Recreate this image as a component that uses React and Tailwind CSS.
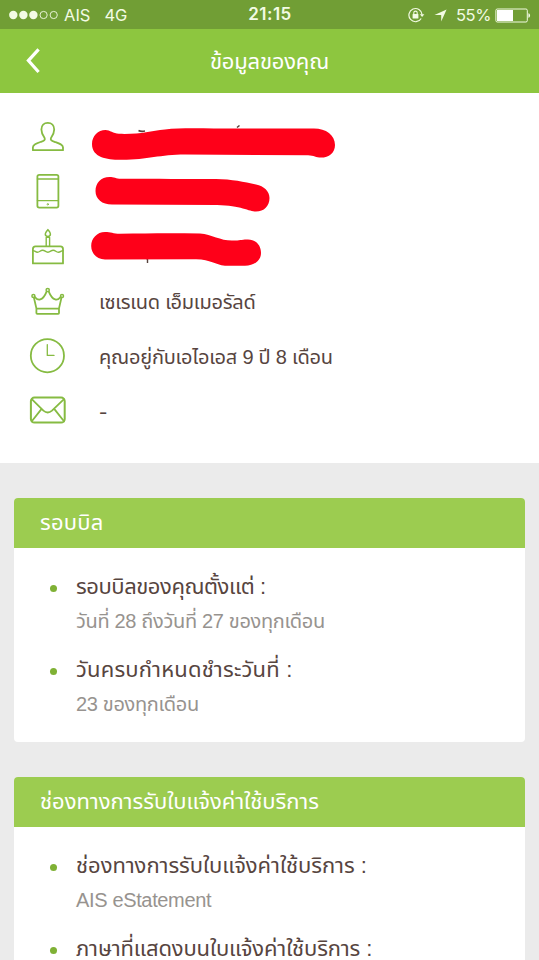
import React from 'react';

const profile = [
    { icon: UserIcon, mark: NameMark },
    { icon: PhoneIcon, mark: PhoneMark },
    { icon: CakeIcon, mark: BirthdayMark },
    { icon: CrownIcon, text: 'เซเรเนด เอ็มเมอรัลด์', style: 'text-[20px] tracking-[-0.25px]' },
    { icon: ClockIcon, text: 'คุณอยู่กับเอไอเอส 9 ปี 8 เดือน', style: 'text-[20px] tracking-[-0.23px]' },
    { icon: MailIcon, text: '-', style: 'text-[20px] scale-x-125 origin-left pt-[2px]' },
];

function Icon({ children }) {
    return (
        <svg
            className="w-10 h-11 shrink-0 text-[#86bb42]"
            viewBox="0 0 40 44"
            fill="none"
            stroke="currentColor"
            strokeWidth="1.8"
            strokeLinejoin="round"
            strokeLinecap="round"
        >
            {children}
        </svg>
    );
}

function UserIcon() {
    return (
        <Icon>
            <path d="M4.9 35.2V32.4C5 29.5 8.5 28.4 13 26.8C16.5 25.6 17.4 24.6 16.6 23C14.6 20.2 13.4 17.6 13.4 14.4C13.4 10.4 16 7.8 19.8 7.8C23.6 7.8 26.2 10.4 26.2 14.4C26.2 17.6 25 20.2 23 23C22.2 24.6 23.1 25.6 26.6 26.8C31.1 28.4 34.9 29.5 35 32.4V35.2Z" />
        </Icon>
    );
}

function PhoneIcon() {
    return (
        <Icon>
            <rect x="9.4" y="4.8" width="21" height="32.8" rx="1.8" />
            <path d="M9.4 9H30.4M9.4 30.6H30.4" strokeWidth="1.3" />
            <circle cx="19.8" cy="34.3" r="0.7" strokeWidth="1" />
        </Icon>
    );
}

function CakeIcon() {
    return (
        <Icon>
            <path d="M4.9 38.4V24C4.9 22.2 6 21.4 7.5 21.4H32.4C34 21.4 35 22.2 35 24V38.4Z" />
            <path d="M5 25.6C7 25.6 7.4 27.2 9.4 27.2C11.8 27.2 12.2 25.2 14.6 25.2C17 25.2 17.4 27.2 19.9 27.2C22.4 27.2 22.8 25.2 25.2 25.2C27.6 25.2 28 27.2 30.4 27.2C32.6 27.2 33 25.6 35 25.6" strokeWidth="1.4" />
            <path d="M18.2 21V12.4H21.6V21" strokeWidth="1.4" />
            <path d="M19.9 4.6C18.6 6.3 17.3 7.4 17.3 9C17.3 10.4 18.4 11.4 19.9 11.4C21.4 11.4 22.4 10.4 22.4 9C22.4 7.4 21.1 6.3 19.9 4.6Z" strokeWidth="1.5" />
        </Icon>
    );
}

function CrownIcon() {
    return (
        <Icon>
            <path d="M8.4 28.4L5.9 17.6M6.9 16.9C9.5 20.6 14.6 21.6 18.6 11.6M20.8 11.6C24.8 21.6 29.9 20.6 32.5 16.9M33.5 17.6L31 28.4" />
            <circle cx="5.4" cy="15.9" r="1.5" strokeWidth="1.5" />
            <circle cx="19.7" cy="10" r="1.6" strokeWidth="1.5" />
            <circle cx="34" cy="15.9" r="1.5" strokeWidth="1.5" />
            <rect x="8.4" y="28.6" width="22.6" height="5.2" rx="0.8" />
        </Icon>
    );
}

function ClockIcon() {
    return (
        <Icon>
            <circle cx="19.4" cy="20.7" r="16.6" />
            <path d="M19.3 9.6V20.4H26" strokeWidth="1.3" />
        </Icon>
    );
}

function MailIcon() {
    return (
        <Icon>
            <rect x="2.9" y="8.6" width="33.8" height="24.9" rx="3.6" strokeWidth="2" />
            <path d="M3.8 10.2L15.4 21.6C18.4 24.2 21 24.2 24 21.6L36 10.2M3.8 32.2L13 20.6M36 32.2L26.8 20.6" />
        </Icon>
    );
}

function NameMark() {
    return (
        <svg className="w-[270px] h-[54px]" viewBox="80 110 270 54" fill="#fe0019">
            <path d="M138.5 130.5Q141 132 145 131M237 127.5L239.5 125.5" stroke="#57423c" strokeWidth="1.6" fill="none" />
            <path d="M105.5 130C110 130 113 133.6 119 133.8C140 134.5 150 131 165 129.4C178 128 195 128.2 214 128.5H314C326 128.5 335 135 335 145C335 153 329 157.6 321 157.6C316 157.6 314 155.3 308 155.2L185 154.6C160 154.6 148 159.8 122 159.8C108 160 92 158 92 144C92 136 98 130 105.5 130Z" />
        </svg>
    );
}

function PhoneMark() {
    return (
        <svg className="w-[270px] h-[54px]" viewBox="80 165 270 54" fill="#fe0019">
            <path d="M109.5 177C114 177 116 178.6 121 178.8C155 179 190 178.8 216 179C232 179.2 244 182 256 184.4C264 186 269.5 191 269.5 198C269.5 206 264 211.6 256 211.6C249 211.6 241 205.4 217 205L112 204.6C102 204.6 95.5 199 95.5 191C95.5 183 101 177 109.5 177Z" />
        </svg>
    );
}

function BirthdayMark() {
    return (
        <svg className="w-[270px] h-[54px]" viewBox="80 220 270 54" fill="#fe0019">
            <path d="M146.5 259H147.5V263" stroke="#57423c" strokeWidth="1.4" fill="none" />
            <path d="M105 232C111 232 113 233.6 120 233.8C150 233 175 233 200 233.4C212 234.4 220 240.4 232 240.6C240 240.8 241 239.2 248 239.4C256 239.6 261 245.6 261 252.8C261 261 254 265.6 245 265.8H225C215 264.6 211 259.6 196 259.2L105 259.4C97 259.4 91.2 253.6 91.2 246C91.2 238.4 97 232 105 232Z" />
        </svg>
    );
}

function StatusBar() {
    return (
        <div className="h-[29px] shrink-0 bg-[#719e35] text-[#f3fbe4] flex items-center pt-px font-['Inter',sans-serif]">
            <div className="flex-1 flex items-center pl-[9px] text-[16.5px]">
                <svg className="w-[50px] h-[10px]" viewBox="0 0 50 10" fill="currentColor">
                    <circle cx="4.3" cy="5" r="4.2" />
                    <circle cx="14.4" cy="5" r="4.2" />
                    <circle cx="24.4" cy="5" r="4.2" />
                    <circle cx="34.6" cy="5" r="3.6" fill="none" stroke="currentColor" strokeWidth="0.9" />
                    <circle cx="44.7" cy="5" r="3.6" fill="none" stroke="currentColor" strokeWidth="0.9" />
                </svg>
                <span className="ml-[5px]">AIS</span>
                <span className="ml-[14px]">4G</span>
            </div>
            <div className="text-[17px] font-semibold tracking-[0.5px]">21:15</div>
            <div className="flex-1 flex items-center justify-end pr-[8px] text-[16.5px]">
                <svg className="w-[17px] h-[16px]" viewBox="0 0 17 16" fill="none" stroke="currentColor">
                    <path d="M13.2 11.5A6.6 6.6 0 1 1 14.1 7.6" strokeWidth="1.2" />
                    <path d="M11.8 7.2H16.4L14.1 10Z" fill="currentColor" stroke="none" />
                    <rect x="4.6" y="7" width="5.8" height="4.4" rx="0.5" fill="currentColor" stroke="none" />
                    <path d="M5.8 7V5.8A1.7 1.7 0 0 1 9.2 5.8V7" strokeWidth="1.1" />
                </svg>
                <svg className="w-[13px] h-[13px] ml-[9px]" viewBox="0 0 13 13" fill="currentColor">
                    <path d="M12.6 0.4L7.2 12.6V5.9H0.5Z" />
                </svg>
                <span className="ml-[9px] tracking-[-0.4px]">55%</span>
                <svg className="w-[36px] h-[15px] ml-[4px]" viewBox="0 0 36 15">
                    <rect x="0.9" y="1" width="31.4" height="13" rx="1.4" fill="none" stroke="currentColor" strokeWidth="1" />
                    <rect x="2" y="2" width="16" height="11" fill="#fff" />
                    <path d="M33.4 5.2C35.6 5.6 35.6 9.4 33.4 9.8Z" fill="currentColor" />
                </svg>
            </div>
        </div>
    );
}

function Card({ title, titleStyle, children }) {
    return (
        <section className="rounded-[4px] overflow-hidden bg-white shrink-0">
            <h2 className={`h-[50px] leading-[50px] pl-[26px] bg-[#9ccc50] text-white whitespace-nowrap ${titleStyle}`}>
                {title}
            </h2>
            <ul className="pt-[20px] pb-[8px]">{children}</ul>
        </section>
    );
}

function Item({ label, labelStyle, value, valueStyle }) {
    return (
        <li className="flex h-[83px] pl-[36px] whitespace-nowrap">
            <span className="w-[7px] h-[7px] mt-[17px] mr-[19px] rounded-full bg-[#7fb135] shrink-0" />
            <div>
                <div className={`h-[37px] leading-[38px] text-[#57453f] ${labelStyle}`}>{label}</div>
                {value && <div className={`h-[32px] leading-[32px] text-[#97938f] ${valueStyle}`}>{value}</div>}
            </div>
        </li>
    );
}

export default function App() {
    return (
        <div className="w-[539px] h-[960px] overflow-hidden flex flex-col bg-[#ebebeb] font-['Liberation_Sans','Noto_Sans_Thai',sans-serif]">
            <StatusBar />
            <header className="h-[64px] shrink-0 bg-[#8dc63f] grid grid-cols-[60px_1fr_60px] items-center text-white">
                <svg className="w-[16px] h-[28px] ml-[25px]" viewBox="0 0 16 28" fill="none" stroke="currentColor" strokeWidth="3.2">
                    <path d="M13.6 2.4L3.4 13.6L13.6 25" />
                </svg>
                <h1 className="text-center text-[22px] tracking-[-0.2px] whitespace-nowrap">ข้อมูลของคุณ</h1>
            </header>

            <div className="h-[370px] shrink-0 bg-white pt-[17px]">
                {profile.map(({ icon: RowIcon, mark: Mark, text, style }, i) => (
                    <div key={i} className="h-[54.8px] flex items-center pl-[28px]">
                        <RowIcon />
                        {Mark ? (
                            <div className="ml-[12px]"><Mark /></div>
                        ) : (
                            <span className={`ml-[31px] text-[#57453f] whitespace-nowrap ${style}`}>{text}</span>
                        )}
                    </div>
                ))}
            </div>

            <main className="flex flex-col gap-[35px] pt-[35px] pl-[14px] pr-[14px]">
                <Card title="รอบบิล" titleStyle="text-[22px] tracking-[0.2px]">
                    <Item
                        label="รอบบิลของคุณตั้งแต่ :"
                        labelStyle="text-[22px] tracking-[-0.45px]"
                        value="วันที่ 28 ถึงวันที่ 27 ของทุกเดือน"
                        valueStyle="text-[20px] tracking-[-0.33px]"
                    />
                    <Item
                        label="วันครบกำหนดชำระวันที่ :"
                        labelStyle="text-[22px] tracking-[0.2px]"
                        value="23 ของทุกเดือน"
                        valueStyle="text-[20px] tracking-[-0.33px]"
                    />
                </Card>
                <Card title="ช่องทางการรับใบแจ้งค่าใช้บริการ" titleStyle="text-[22px] tracking-[-0.04px]">
                    <Item
                        label="ช่องทางการรับใบแจ้งค่าใช้บริการ :"
                        labelStyle="text-[22px] tracking-[-0.05px]"
                        value="AIS eStatement"
                        valueStyle="text-[20px] tracking-[-0.35px]"
                    />
                    <Item
                        label="ภาษาที่แสดงบนใบแจ้งค่าใช้บริการ :"
                        labelStyle="text-[22px] tracking-[-0.15px]"
                    />
                </Card>
            </main>
        </div>
    );
}
